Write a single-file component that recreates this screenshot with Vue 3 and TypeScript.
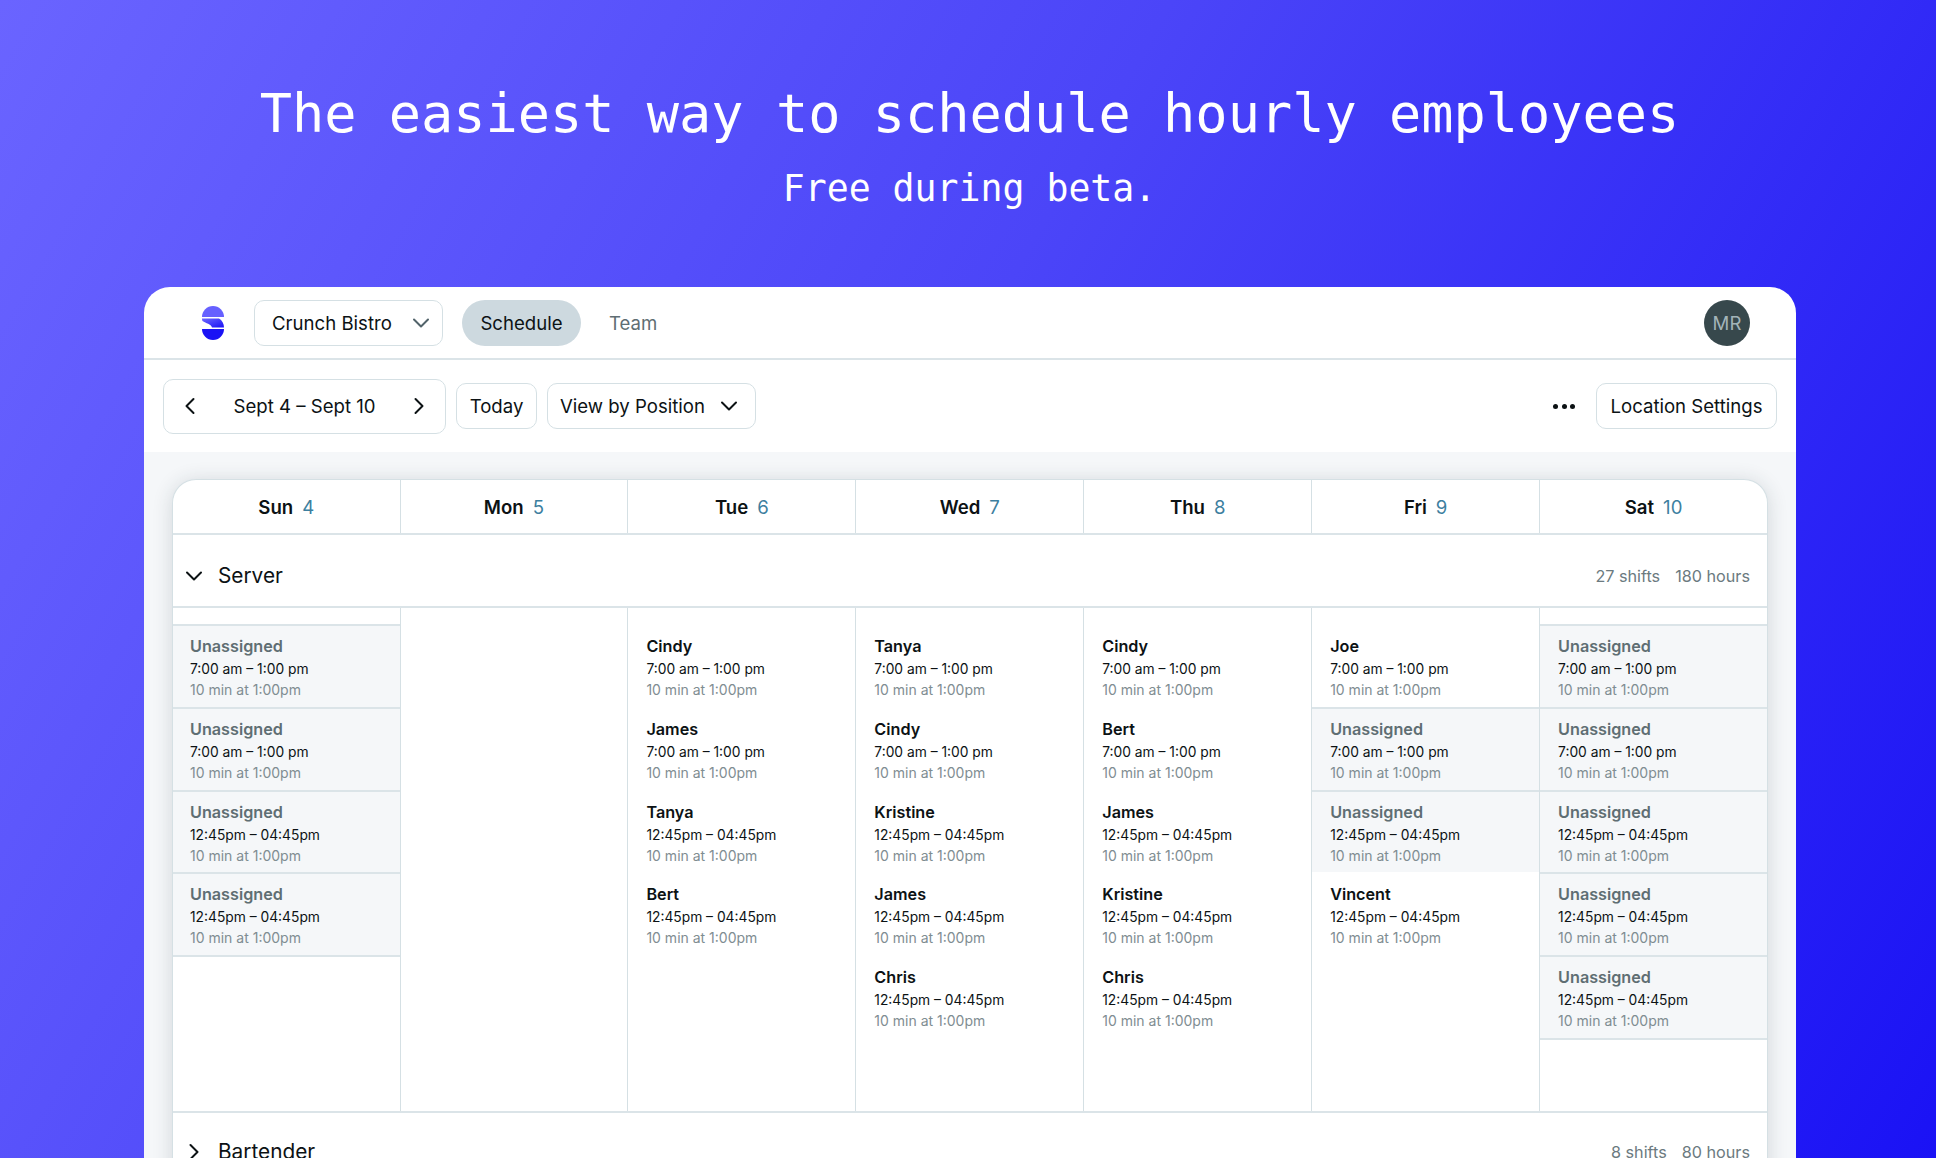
<script setup lang="ts">
interface Shift { name: string; time: string }
const AM = '7:00 am – 1:00 pm'
const PM = '12:45pm – 04:45pm'
const s = (name: string, time: string): Shift => ({ name, time })
const U = 'Unassigned'
const days: { day: string; num: number; shifts: Shift[] }[] = [
  { day: 'Sun', num: 4, shifts: [s(U, AM), s(U, AM), s(U, PM), s(U, PM)] },
  { day: 'Mon', num: 5, shifts: [] },
  { day: 'Tue', num: 6, shifts: [s('Cindy', AM), s('James', AM), s('Tanya', PM), s('Bert', PM)] },
  { day: 'Wed', num: 7, shifts: [s('Tanya', AM), s('Cindy', AM), s('Kristine', PM), s('James', PM), s('Chris', PM)] },
  { day: 'Thu', num: 8, shifts: [s('Cindy', AM), s('Bert', AM), s('James', PM), s('Kristine', PM), s('Chris', PM)] },
  { day: 'Fri', num: 9, shifts: [s('Joe', AM), s(U, AM), s(U, PM), s('Vincent', PM)] },
  { day: 'Sat', num: 10, shifts: [s(U, AM), s(U, AM), s(U, PM), s(U, PM), s(U, PM)] },
]
</script>

<template>
  <div class="page">
    <header class="hero">
      <h1>The easiest way to schedule hourly employees</h1>
      <p>Free during beta.</p>
    </header>
    <main class="card">
      <nav class="topbar">
        <svg class="logo" width="22" height="34" viewBox="0 0 22 34">
          <defs>
            <linearGradient id="lg" x1="0" y1="0" x2="1" y2="1">
              <stop offset="0" stop-color="#6c66ff" />
              <stop offset="1" stop-color="#1a12f5" />
            </linearGradient>
          </defs>
          <path d="M0 11A11 11 0 0 1 22 11Z" fill="#6660ff" />
          <path d="M0 12.4H17C20 14 22 17.5 22 21.4H10C9 18 4 17.5 0.5 15 0.1 14.2 0 13.4 0 12.4Z" fill="url(#lg)" />
          <path d="M0 23H22A11 11 0 0 1 0 23Z" fill="#1a12f5" />
        </svg>
        <button class="btn select">
          Crunch Bistro
          <svg width="18" height="18" viewBox="0 0 18 18" class="chev-muted"><path d="M2 5.5 9 12.5 16 5.5" /></svg>
        </button>
        <button class="pill">Schedule</button>
        <span class="team">Team</span>
        <span class="avatar">MR</span>
      </nav>
      <div class="toolbar">
        <div class="btn dates">
          <svg width="12" height="18" viewBox="0 0 12 18" class="chev"><path d="M9.5 2 2.5 9 9.5 16" /></svg>
          <span>Sept 4 – Sept 10</span>
          <svg width="12" height="18" viewBox="0 0 12 18" class="chev"><path d="M2.5 2 9.5 9 2.5 16" /></svg>
        </div>
        <button class="btn today">Today</button>
        <button class="btn view">
          View by Position
          <svg width="18" height="18" viewBox="0 0 18 18" class="chev"><path d="M2 5.5 9 12.5 16 5.5" /></svg>
        </button>
        <span class="dots"><i></i><i></i><i></i></span>
        <button class="btn settings">Location Settings</button>
      </div>
      <section class="content">
        <div class="grid">
          <div class="days">
            <div v-for="d in days" :key="d.day" class="day">
              <b>{{ d.day }}</b><span>{{ d.num }}</span>
            </div>
          </div>
          <div class="section">
            <svg width="18" height="18" viewBox="0 0 18 18" class="chev"><path d="M2 5.5 9 12.5 16 5.5" /></svg>
            <span class="title">Server</span>
            <span class="stats"><span>27 shifts</span><span>180 hours</span></span>
          </div>
          <div class="cols">
            <div v-for="d in days" :key="d.day" class="col">
              <div
                v-for="(x, i) in d.shifts"
                :key="i"
                class="shift"
                :class="{ open: x.name === U }"
              >
                <div class="name">{{ x.name }}</div>
                <div class="time">{{ x.time }}</div>
                <div class="break">10 min at 1:00pm</div>
              </div>
            </div>
          </div>
          <div class="section last">
            <svg width="18" height="18" viewBox="0 0 18 18" class="chev"><path d="M5.5 2 12.5 9 5.5 16" /></svg>
            <span class="title">Bartender</span>
            <span class="stats"><span>8 shifts</span><span>80 hours</span></span>
          </div>
        </div>
      </section>
    </main>
  </div>
</template>

<style>
html, body { margin: 0; overflow: hidden; }
</style>

<style scoped>
.page {
  width: 1936px;
  height: 1158px;
  overflow: hidden;
  background: linear-gradient(120deg, #6a64ff 0%, #4b45f8 45%, #1a12f5 100%);
  font-family: Inter, "Liberation Sans", sans-serif;
  color: #0c1214;
  display: flex;
  flex-direction: column;
}
.hero { flex: none; height: 287px; text-align: center; color: #fff; font-family: "DejaVu Sans Mono", monospace; padding-left: 3px; box-sizing: border-box; }
.hero h1 { margin: 0; padding-top: 82px; font-size: 53.6px; line-height: 64px; font-weight: 400; }
.hero p { margin: 0; padding-top: 21px; font-size: 36.5px; line-height: 44px; }
.card {
  margin-left: 144px;
  width: 1652px;
  flex: 1;
  min-height: 0;
  overflow: hidden;
  background: #fff;
  border-radius: 26px 26px 0 0;
  display: flex;
  flex-direction: column;
}
button { font: inherit; color: inherit; background: none; padding: 0; }
.btn {
  border: 1px solid #d5e0e4;
  border-radius: 10px;
  background: #fff;
  font-size: 18.6px;
  display: flex;
  align-items: center;
  box-sizing: border-box;
  height: 46px;
  flex: none;
}
.chev path, .chev-muted path { fill: none; stroke: #0c1214; stroke-width: 2; stroke-linecap: round; stroke-linejoin: round; }
.chev-muted path { stroke: #52636a; }
.topbar {
  flex: none;
  height: 73px;
  box-sizing: border-box;
  border-bottom: 2px solid #dbe4e8;
  padding: 13px 46px 0 58px;
  display: flex;
  align-items: flex-start;
}
.logo { margin-top: 6px; margin-right: 30px; }
.select { width: 189px; padding: 0 12px 0 17px; justify-content: space-between; }
.pill {
  margin-left: 19px;
  width: 119px;
  height: 46px;
  border: 0;
  border-radius: 23px;
  background: #cdd9df;
  font-size: 18.6px;
}
.team { margin-left: 28px; font-size: 18.6px; line-height: 46px; color: #5f6e73; }
.avatar {
  margin-left: auto;
  width: 46px;
  height: 46px;
  border-radius: 50%;
  background: #37484c;
  color: #a3b4b9;
  font-size: 18.6px;
  display: flex;
  align-items: center;
  justify-content: center;
}
.toolbar {
  flex: none;
  height: 92px;
  box-sizing: border-box;
  padding: 0 19px;
  display: flex;
  align-items: center;
}
.dates { width: 283px; height: 55px; padding: 0 20px; justify-content: space-between; }
.today { margin-left: 10px; width: 81px; justify-content: center; }
.view { margin-left: 10px; width: 209px; padding: 0 17px 0 12px; justify-content: space-between; }
.dots { margin-left: auto; margin-right: 21px; display: flex; gap: 3.5px; }
.dots i { width: 5px; height: 5px; border-radius: 50%; background: #0c1214; }
.settings { width: 181px; justify-content: center; }
.content { flex: 1; min-height: 0; background: #f5f7f9; padding: 27px 28px 0; overflow: hidden; }
.grid {
  height: 760px;
  background: #fff;
  border: 1px solid #d5e0e4;
  border-bottom: 0;
  border-radius: 24px 24px 0 0;
  box-shadow: 0 2px 20px rgba(30, 50, 60, 0.16);
}
.days, .cols { display: grid; grid-template-columns: 226.5px repeat(6, 1fr); }
.days { height: 55px; border-bottom: 2px solid #dbe4e8; box-sizing: border-box; }
.day {
  display: flex;
  align-items: center;
  justify-content: center;
  gap: 9px;
  font-size: 18.6px;
  border-left: 1px solid #d5e0e4;
}
.day:first-child, .col:first-child { border-left: 0; }
.day b { font-weight: 600; }
.day span { color: #3d7f9f; }
.section {
  height: 73px;
  box-sizing: border-box;
  border-bottom: 2px solid #dbe4e8;
  padding: 10px 17px 0 12px;
  display: flex;
  align-items: center;
  font-size: 20.8px;
}
.section.last { border-bottom: 0; padding-top: 4px; }
.title { margin-left: 15px; }
.stats { margin-left: auto; display: flex; gap: 15px; font-size: 16.2px; color: #6b7a80; }
.cols { height: 505px; border-bottom: 2px solid #dbe4e8; box-sizing: border-box; }
.col { border-left: 1px solid #d5e0e4; padding-top: 16px; }
.shift {
  height: 82.8px;
  box-sizing: border-box;
  border-top: 2px solid transparent;
  padding: 8px 0 0 18px;
}
.col:first-child .shift { padding-left: 17px; }
.shift.open { background: #f5f7f9; border-top-color: #dbe4e8; }
.shift.open:last-child { height: 84.8px; border-bottom: 2px solid #dbe4e8; }
.name { font-size: 16.2px; font-weight: 600; line-height: 24px; }
.open .name { color: #5f6e73; }
.time { font-size: 13.8px; line-height: 22px; }
.break { font-size: 14px; line-height: 20px; color: #7f8d92; }
</style>
